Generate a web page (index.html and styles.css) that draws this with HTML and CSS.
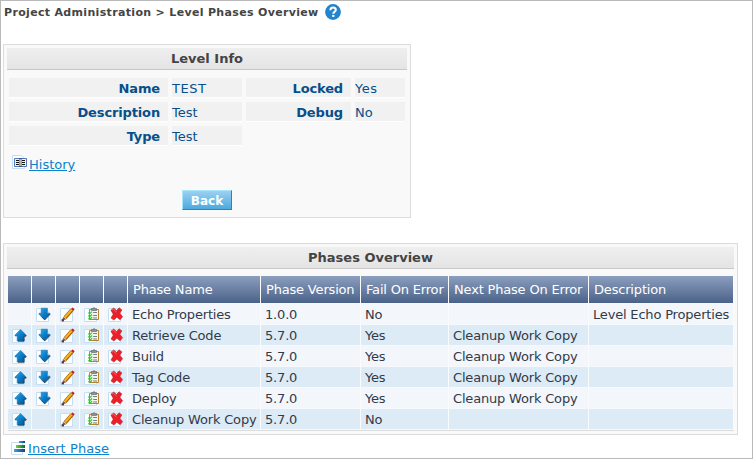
FILE: index.html
```html
<!DOCTYPE html>
<html lang="en">
<head>
<meta charset="utf-8">
<title>Level Phases Overview</title>
<link rel="stylesheet" href="styles.css">
</head>
<body>
<svg class="defs" aria-hidden="true">
  <defs>
    <linearGradient id="blue" x1="0" y1="0" x2="1" y2="1"><stop offset="0" stop-color="#35a9e6"/><stop offset=".5" stop-color="#087dc9"/><stop offset="1" stop-color="#0a4f8c"/></linearGradient>
    <linearGradient id="bar" x1="0" x2="1"><stop offset="0" stop-color="#3fa4e8"/><stop offset="1" stop-color="#163f6b"/></linearGradient>
    <linearGradient id="green" x1="0" x2="1"><stop offset="0" stop-color="#70cf4b"/><stop offset="1" stop-color="#17672e"/></linearGradient>
    <symbol id="paper" viewBox="0 0 16 16"><path d="M.5 1.5h9l3 3v10H.5z" fill="#fff" stroke="#c4dff2"/></symbol>
    <symbol id="up" viewBox="0 0 16 16"><use href="#paper"/><path d="M8.5 1.5l5.5 5.5v1h-2v5H5.2V8H3V7z" fill="url(#blue)" stroke="#1b75ae" stroke-width=".6"/><path d="M14 7.2v1h-2v5H6" fill="none" stroke="#24384d" stroke-width=".8"/></symbol>
    <symbol id="down" viewBox="0 0 16 16"><use href="#paper"/><path d="M5.2 1.2h6.2v5h2.6v1l-5.4 5.6L3 7.2v-1h2.2z" fill="url(#blue)" stroke="#1b75ae" stroke-width=".6"/><path d="M14.1 7.2l-5.3 5.7-3.3-3.2" fill="none" stroke="#24384d" stroke-width=".8"/></symbol>
    <symbol id="edit" viewBox="0 0 16 16"><use href="#paper"/><path d="M5 10.8l7-8" stroke="#a75d08" stroke-width="3.8"/><path d="M5 10.3l6.8-7.8" stroke="#f8b81c" stroke-width="2"/><path d="M11 1.9l1.4-1.3 2.2 1.5-1.1 2z" fill="#c51c28"/><path d="M2.2 13.6l.8-3.6 3.4 2.3z" fill="#86543f"/><path d="M1.6 12.2h2.4v2.2H1.6z" fill="#5b3940"/></symbol>
    <symbol id="check" viewBox="0 0 16 16"><use href="#paper"/><path d="M5.5 2.5h9v10h-9z" fill="#f1f4ef" stroke="#b9822b"/><path d="M7.5 1.5h5v2h-5z" fill="#8a9297" stroke="#59636a" stroke-width=".6"/><path d="M9 .5h2v1H9z" fill="#717a80"/><path d="M9.2 5.5h3.8m-3.8 3h3.8m-3.8 2.5h3.8" stroke="#708087"/><path d="M4.3 5.6l1.3 1.2 2.5-2.2M4.3 8.5l1.3 1.2 2.5-2.2M4.3 11.4l1.3 1.1 2.5-2.2" fill="none" stroke="#35c62e" stroke-width="1.2"/></symbol>
    <symbol id="delete" viewBox="0 0 16 16"><use href="#paper"/><path d="M2.9 3.2l2.8-2.2 2.9 2.5 2.5-2.7 2.8 2.1-2.1 3.3 2.8 3.5-2.5 3.1-3.3-2.6-2.9 2.9-2.9-2.2 2.2-3.7z" fill="#ed1e27" stroke="#b3282f" stroke-width=".6"/><path d="M4.2 3l1.2-.8 3.1 2.8" fill="none" stroke="#ff7777" stroke-width=".8"/></symbol>
    <symbol id="history" viewBox="0 0 16 16"><path d="M.5.5h9l3 3v10H.5z" fill="#fff" stroke="#c4dff2"/><path d="M2.5 3.5h12v8h-12z" fill="#f4f0df" stroke="#5577b8"/><path d="M7.5 3h2v9h-2z" fill="#30466d"/><path d="M8 4h1v7H8z" fill="#b8b5a8"/><path d="M4 5.5h3m-3 2h3m-3 2h3m3-4h3m-3 2h3m-3 2h3" stroke="#111"/></symbol>
    <symbol id="insert" viewBox="0 0 16 16"><path d="M.5 2.5h11v12H.5z" fill="#fff" stroke="#c4dff2"/><path d="M8 1h6v2H8z" fill="url(#bar)"/><path d="M5 5h9v3H5z" fill="url(#green)"/><path d="M3 9h11v3H3z" fill="url(#bar)"/></symbol>
  </defs>
</svg>
<main class="page">
  <header class="crumbs"><span>Project Administration &gt; Level Phases Overview</span>
    <svg class="help" viewBox="0 0 16 16"><circle cx="8" cy="8" r="7.9" fill="#2085cd"/><path d="M5.4 6.2C5.3 2.5 11 2.7 10.8 6c-.1 1.7-2.5 1.8-2.5 3.7" fill="none" stroke="#fff" stroke-width="2.1"/><path d="M7.2 10.9h2.2V13H7.2z" fill="#fff"/></svg>
  </header>
  <section class="panel info">
    <h2>Level Info</h2>
    <div class="fields">
      <b>Name</b><span class="wide">TEST</span><b>Locked</b><span class="wide">Yes</span>
      <b>Description</b><span>Test</span><b>Debug</b><span>No</span>
      <b>Type</b><span>Test</span>
    </div>
    <div class="history"><svg class="icon"><use href="#history"/></svg><a href="#">History</a></div>
    <button class="back" type="button">Back</button>
  </section>
  <section class="panel phases">
    <h2>Phases Overview</h2>
    <table>
      <colgroup><col class="c-icon"><col class="c-icon"><col class="c-icon"><col class="c-icon"><col class="c-icon"><col class="c-name"><col class="c-version"><col class="c-fail"><col class="c-next"><col class="c-desc"></colgroup>
      <thead><tr><th></th><th></th><th></th><th></th><th></th><th>Phase Name</th><th>Phase Version</th><th>Fail On Error</th><th>Next Phase On Error</th><th>Description</th></tr></thead>
      <tbody>
        <tr><td></td><td><svg class="icon"><use href="#down"/></svg></td><td><svg class="icon"><use href="#edit"/></svg></td><td><svg class="icon"><use href="#check"/></svg></td><td><svg class="icon"><use href="#delete"/></svg></td><td>Echo Properties</td><td>1.0.0</td><td>No</td><td></td><td>Level Echo Properties</td></tr>
        <tr><td><svg class="icon"><use href="#up"/></svg></td><td><svg class="icon"><use href="#down"/></svg></td><td><svg class="icon"><use href="#edit"/></svg></td><td><svg class="icon"><use href="#check"/></svg></td><td><svg class="icon"><use href="#delete"/></svg></td><td>Retrieve Code</td><td>5.7.0</td><td>Yes</td><td>Cleanup Work Copy</td><td></td></tr>
        <tr><td><svg class="icon"><use href="#up"/></svg></td><td><svg class="icon"><use href="#down"/></svg></td><td><svg class="icon"><use href="#edit"/></svg></td><td><svg class="icon"><use href="#check"/></svg></td><td><svg class="icon"><use href="#delete"/></svg></td><td>Build</td><td>5.7.0</td><td>Yes</td><td>Cleanup Work Copy</td><td></td></tr>
        <tr><td><svg class="icon"><use href="#up"/></svg></td><td><svg class="icon"><use href="#down"/></svg></td><td><svg class="icon"><use href="#edit"/></svg></td><td><svg class="icon"><use href="#check"/></svg></td><td><svg class="icon"><use href="#delete"/></svg></td><td>Tag Code</td><td>5.7.0</td><td>Yes</td><td>Cleanup Work Copy</td><td></td></tr>
        <tr><td><svg class="icon"><use href="#up"/></svg></td><td><svg class="icon"><use href="#down"/></svg></td><td><svg class="icon"><use href="#edit"/></svg></td><td><svg class="icon"><use href="#check"/></svg></td><td><svg class="icon"><use href="#delete"/></svg></td><td>Deploy</td><td>5.7.0</td><td>Yes</td><td>Cleanup Work Copy</td><td></td></tr>
        <tr><td><svg class="icon"><use href="#up"/></svg></td><td></td><td><svg class="icon"><use href="#edit"/></svg></td><td><svg class="icon"><use href="#check"/></svg></td><td><svg class="icon"><use href="#delete"/></svg></td><td>Cleanup Work Copy</td><td>5.7.0</td><td>No</td><td></td><td></td></tr>
      </tbody>
    </table>
  </section>
  <footer class="insert"><svg class="icon"><use href="#insert"/></svg><a href="#">Insert Phase</a></footer>
</main>
</body>
</html>
```
FILE: styles.css
```css
* { box-sizing: border-box; }
body { margin: 0; background: #fff; font-family: "DejaVu Sans", sans-serif; font-size: 13px; }
.defs { position: absolute; width: 0; height: 0; }
.page { width: 753px; height: 459px; border: 1px solid #bababa; padding-left: 2px; overflow: hidden; }
.crumbs { display: flex; align-items: center; height: 43px; padding: 0 0 21px 1px; gap: 6px; font-size: 11px; font-weight: bold; letter-spacing: .33px; color: #444; white-space: nowrap; }
.help { width: 16px; height: 16px; }
.panel { border: 1px solid #dcdcdc; background: #f9f9f9; padding: 3px; }
h2 { margin: 0; height: 22px; line-height: 21px; border-bottom: 1px solid #c8c8c8; background: linear-gradient(#efefef, #e4e4e4); text-align: center; font-size: 13px; color: #444; }
.info { width: 408px; height: 174px; }
.fields { display: grid; grid-template-columns: 159px 70px 105px 50px; grid-auto-rows: 20px; gap: 4px; margin: 8px 0 0 2px; color: #064f8a; line-height: 21px; }
.fields > * { background: #f1f1f1; border-bottom: 1px solid #fff; }
.fields b { text-align: right; padding-right: 8px; letter-spacing: -.14px; }
.fields .wide { letter-spacing: .5px; }
.history { display: flex; height: 20px; margin: 9px 0 0 5px; gap: 1px; }
.history a { line-height: 19px; }
a { color: #0a82cc; text-decoration: underline; }
.icon { display: block; flex: none; width: 16px; height: 16px; }
.back { display: block; width: 50px; height: 20px; margin: 15px 0 0 175px; padding: 0; border: 1px solid; border-color: #a8e6fb #2484c4 #2484c4 #a8e6fb; background: linear-gradient(#9bd1f1, #4da9de); font: bold 12px/20px "DejaVu Sans", sans-serif; color: #fff; }
.phases { width: 735px; height: 192px; margin-top: 25px; }
table { table-layout: fixed; width: 726px; margin: 7px 0 0 1px; border-spacing: 0; color: #333a48; letter-spacing: -.18px; box-shadow: 0 1px #dcdcdc; }
.c-icon { width: 24px; }
.c-name { width: 133px; }
.c-version { width: 100px; }
.c-fail { width: 88px; }
.c-next { width: 140px; }
.c-desc { width: 145px; }
th, td { padding: 0; text-align: left; white-space: nowrap; border-right: 1px solid #fafbfd; border-bottom: 1px solid #f6f9fc; }
th { height: 28px; padding-left: 5px; background: linear-gradient(#8b9ebe, #4b6288); background-clip: padding-box; font-weight: normal; color: #fff; line-height: 27px; }
td { height: 21px; line-height: 18px; padding: 2px 0 0 4px; background: #f3f6fb; background-clip: padding-box; }
tr:nth-child(even) td { background-color: #ddebf7; }
td .icon { margin: 1px 0; }
.insert { display: flex; gap: 1px; padding: 5px 0 0 8px; }
.insert a { line-height: 18px; letter-spacing: .08px; }
```
